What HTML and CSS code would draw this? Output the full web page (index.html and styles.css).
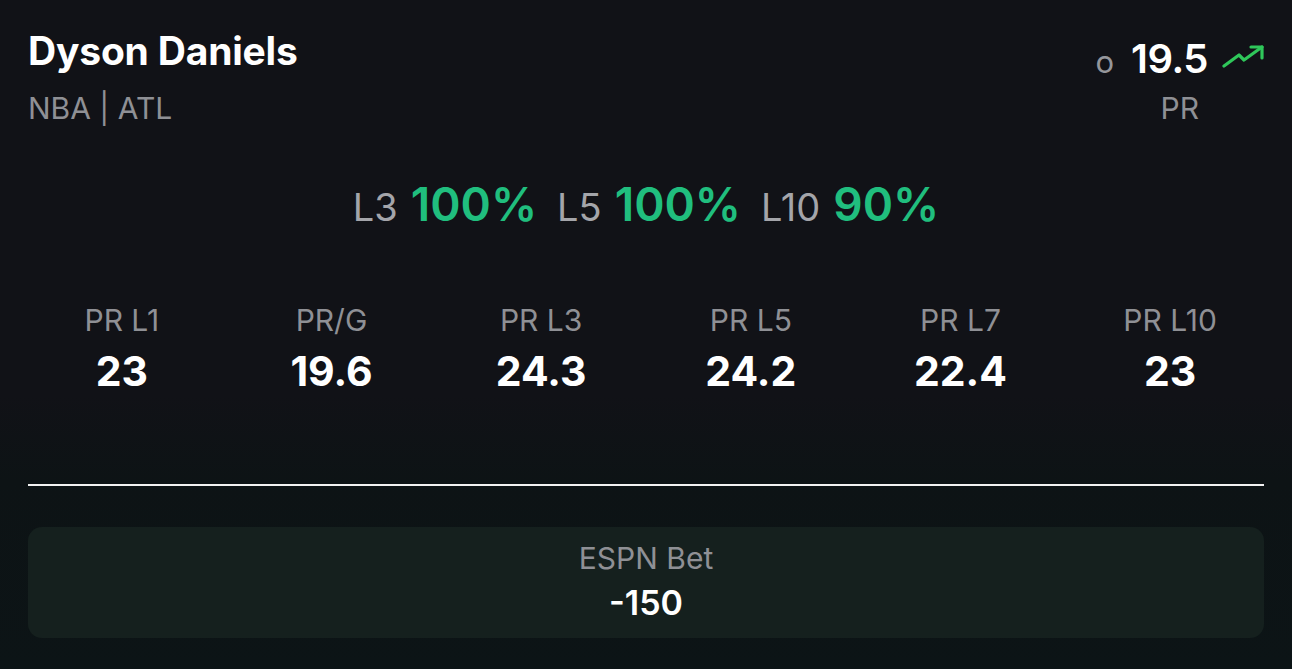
FILE: index.html
```html
<!DOCTYPE html>
<html lang="en">

<head>
    <meta charset="UTF-8">
    <title>Dyson Daniels PR</title>
    <link rel="stylesheet" href="styles.css">
</head>

<body>
    <div class="card">
        <div class="head">
            <div class="who">
                <div class="name">Dyson Daniels</div>
                <div class="team">NBA | ATL</div>
            </div>
            <div class="line">
                <div class="line-top">
                    <span class="ou">o</span>
                    <span class="num">19.5</span>
                    <svg class="trend" width="42" height="24" viewBox="0 0 42 24">
                        <polyline points="2,21 17,10 22,15 40,2" fill="none" stroke="#2fc75a" stroke-width="3.2" stroke-linecap="round" stroke-linejoin="round"/>
                        <polyline points="29,2 40,2 40,13" fill="none" stroke="#2fc75a" stroke-width="3.2" stroke-linecap="round" stroke-linejoin="round"/>
                    </svg>
                </div>
                <div class="stat">PR</div>
            </div>
        </div>

        <!-- 命中率 -->
        <div class="hits">
            <span class="lbl">L3</span><span class="pct">100%</span>
            <span class="lbl">L5</span><span class="pct">100%</span>
            <span class="lbl">L10</span><span class="pct">90%</span>
        </div>

        <div class="avgs">
            <div class="avg"><span class="k">PR L1</span><span class="v">23</span></div>
            <div class="avg"><span class="k">PR/G</span><span class="v">19.6</span></div>
            <div class="avg"><span class="k">PR L3</span><span class="v">24.3</span></div>
            <div class="avg"><span class="k">PR L5</span><span class="v">24.2</span></div>
            <div class="avg"><span class="k">PR L7</span><span class="v">22.4</span></div>
            <div class="avg"><span class="k">PR L10</span><span class="v">23</span></div>
        </div>

        <div class="rule"></div>

        <div class="book">
            <span class="book-name">ESPN Bet</span>
            <span class="odds">-150</span>
        </div>
    </div>
</body>

</html>
```

FILE: styles.css
```css
* {
    padding: 0;
    margin: 0;
    box-sizing: border-box;
}

html,
body {
    height: 100%;
}

body {
    background: linear-gradient(to bottom, #111217 0px, #111217 395px, #0d1315 480px, #0c1416 669px);
    font-family: Inter, "Noto Sans", sans-serif;
    color: #fff;
}

.card {
    padding: 28px 28px 0;
}

.head {
    display: flex;
    justify-content: space-between;
    align-items: flex-start;
}

.name {
    font-size: 39px;
    font-weight: 700;
    line-height: 46px;
    letter-spacing: -0.2px;
}

.team {
    margin-top: 16px;
    font-size: 30px;
    line-height: 36px;
    color: #8f9095;
}

.line {
    display: flex;
    flex-direction: column;
    align-items: center;
    padding-top: 9px;
}

.line-top {
    display: flex;
    align-items: center;
    height: 44px;
}

.ou {
    font-size: 31px;
    color: #95969b;
    margin-right: 17px;
    margin-top: 4px;
}

.num {
    font-size: 40px;
    font-weight: 600;
    line-height: 44px;
    letter-spacing: -0.5px;
}

.trend {
    margin-left: 14px;
    margin-top: -4px;
}

.stat {
    margin-top: 9px;
    font-size: 30px;
    line-height: 36px;
    color: #8f9095;
}

.hits {
    margin-top: 50px;
    display: flex;
    justify-content: center;
    align-items: baseline;
    line-height: 56px;
}

.lbl {
    font-size: 38px;
    color: #a4a5aa;
    margin-right: 13px;
}

.pct {
    font-size: 46px;
    font-weight: 600;
    color: #20be7e;
    margin-right: 20px;
}

.pct:last-child {
    margin-right: 0;
}

.avgs {
    margin: 67px -11px 0;
    display: grid;
    grid-template-columns: repeat(6, 1fr);
}

.avg {
    display: flex;
    flex-direction: column;
    align-items: center;
}

.avg .k {
    font-size: 30px;
    line-height: 36px;
    color: #8f9095;
}

.avg .v {
    margin-top: 9px;
    font-size: 41px;
    font-weight: 700;
    line-height: 48px;
}

.rule {
    margin-top: 89px;
    height: 2px;
    background: #f2f2f2;
}

.book {
    margin-top: 41px;
    height: 111px;
    border-radius: 14px;
    background: #15201e;
    display: flex;
    flex-direction: column;
    align-items: center;
    padding-top: 13px;
}

.book-name {
    font-size: 30px;
    line-height: 36px;
    color: #8f9095;
}

.odds {
    margin-top: 7px;
    font-size: 34px;
    font-weight: 600;
    line-height: 40px;
}
```
